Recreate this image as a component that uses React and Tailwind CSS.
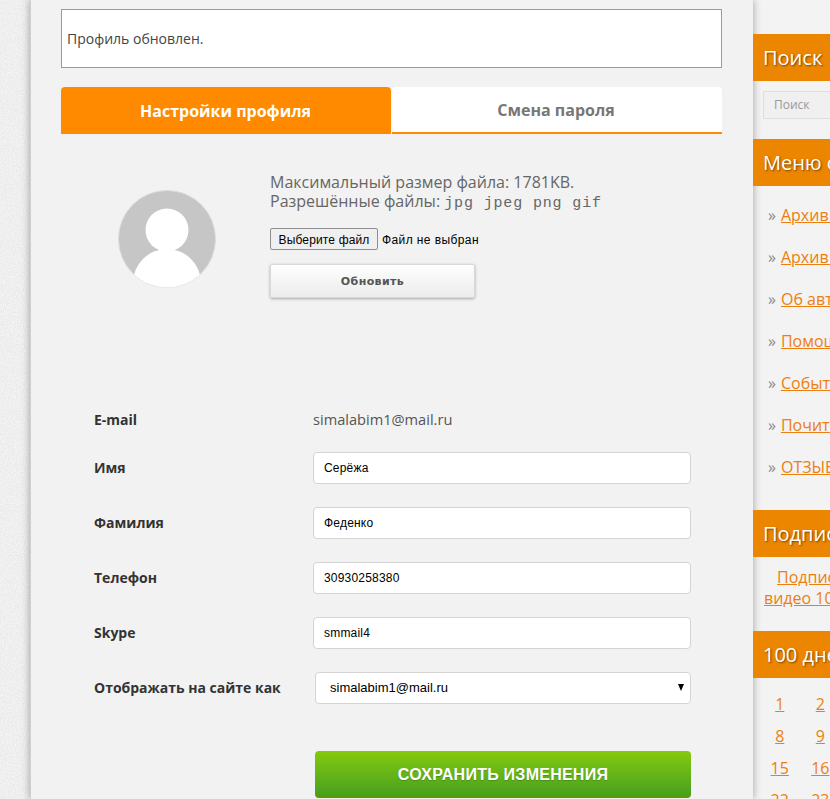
import React from 'react';

const Field = ({ label, value }) => (
  <div className="flex items-center h-[32px] mb-[23px]">
    <label className="w-[252px] pl-[33px] pb-[2px] text-[14px] font-bold text-[#333]">{label}</label>
    <input
      readOnly
      value={value}
      className="w-[378px] h-[32px] bg-white border border-[#d4d4d4] rounded-[4px] px-[10px] text-[12px] tracking-[0.2px] text-black font-['Liberation_Sans'] outline-none"
    />
  </div>
);

const SideHead = ({ children }) => (
  <div className="relative z-20 h-[47px] bg-[#ec8600] pl-[10px] flex items-center text-[20px] text-white [text-shadow:1px_1px_2px_rgba(0,0,0,0.5)]">
    {children}
  </div>
);

const links = ['Архив прямых эфиров', 'Архив видео', 'Об авторе', 'Помощь', 'События', 'Почитать', 'ОТЗЫВЫ'];
const days = [1, 2, 3, 4, 5, 6, 7, 8, 9, 10, 11, 12, 13, 14, 15, 16, 17, 18, 19, 20, 21, 22, 23];

const App = () => {
  return (
    <div className="flex w-[830px] h-[799px] overflow-hidden bg-[#ededed] font-['Open_Sans',sans-serif]">
      {/* paper texture on the left gutter */}
      <div className="w-[30px] shrink-0">
        <svg className="block w-[30px] h-[799px]">
          <filter id="paper">
            <feTurbulence type="fractalNoise" baseFrequency="0.9" numOctaves="2" seed="4" />
            <feColorMatrix type="matrix" values="0 0 0 0 0.97  0 0 0 0 0.97  0 0 0 0 0.97  1.6 0 0 0 -0.5" />
          </filter>
          <rect width="30" height="799" fill="#e9e9e9" />
          <rect width="30" height="799" filter="url(#paper)" />
        </svg>
      </div>

      <main className="relative z-10 w-[723px] shrink-0 bg-[#f2f2f2] border-l border-[#d0d0d0] pl-[30px] pr-[30px] shadow-[0_0_8px_rgba(0,0,0,0.35)]">
        <div className="h-[59px] w-[661px] mt-[9px] bg-white border border-[#e68a2e] flex items-center pl-[5px] text-[14px] text-[#444]">
          Профиль обновлен.
        </div>

        <div className="flex w-[661px] h-[47px] mt-[19px] gap-[1px] text-[16px] font-bold">
          <div className="w-[330px] bg-[#ff8a00] rounded-t-[4px] text-white flex items-center justify-center pr-[1px]">
            Настройки профиля
          </div>
          <div className="w-[330px] bg-white rounded-t-[4px] border-b-2 border-[#ff8a00] text-[#777] flex items-center justify-center pr-[2px]">
            Смена пароля
          </div>
        </div>

        <div className="flex mt-[37px] h-[238px]">
          <div className="ml-[57px] mt-[19px] w-[98px] h-[98px] shrink-0">
            <svg viewBox="0 0 98 98" className="w-[98px] h-[98px]">
              <defs>
                <clipPath id="avatarClip"><circle cx="49" cy="49" r="48.5" /></clipPath>
              </defs>
              <circle cx="49" cy="49" r="48.5" fill="#c6c6c6" stroke="#dcdcdc" />
              <g clipPath="url(#avatarClip)">
                <circle cx="49" cy="40" r="21.5" fill="#fff" />
                <ellipse cx="49" cy="93" rx="34" ry="34" fill="#fff" />
              </g>
            </svg>
          </div>
          <div className="ml-[54px] pt-[2px]">
            <p className="text-[16px] leading-[19px] text-[#666]">Максимальный размер файла: 1781KB.</p>
            <p className="text-[16px] leading-[19px] text-[#666]">
              Разрешённые файлы: <span className="font-['Liberation_Mono'] text-[#666] text-[15px] tracking-[0.85px]">jpg jpeg png gif</span>
            </p>
            <div className="flex items-center mt-[15px] font-['Liberation_Sans'] text-[12px] text-black">
              <button className="w-[108px] h-[22px] pt-[1px] bg-[#efefef] border border-[#8f8f8f] rounded-[2px] tracking-[0.15px]">Выберите файл</button>
              <span className="ml-[4px] mt-[2px] tracking-[0.4px]">Файл не выбран</span>
            </div>
            <button className="block w-[205px] h-[34px] mt-[14px] pt-[2px] border border-[#d8d8d8] rounded-[2px] bg-gradient-to-b from-[#fefefe] to-[#ececec] shadow-[0_1px_3px_rgba(0,0,0,0.3)] text-[11px] font-bold tracking-[0.4px] text-[#555] font-['DejaVu_Sans']">
              Обновить
            </button>
          </div>
        </div>

        <div className="flex items-center h-[21px] mb-[22px]">
          <span className="w-[252px] pl-[33px] text-[14px] font-bold text-[#333]">E-mail</span>
          <span className="text-[14.6px] text-[#555]">simalabim1@mail.ru</span>
        </div>
        <div>
          <Field label="Имя" value="Серёжа" />
          <Field label="Фамилия" value="Феденко" />
          <Field label="Телефон" value="30930258380" />
          <Field label="Skype" value="smmail4" />
        </div>
        <div className="flex items-center h-[32px]">
          <label className="w-[254px] pl-[33px] pb-[2px] text-[14px] font-bold text-[#333] whitespace-nowrap">Отображать на сайте как</label>
          <div className="relative w-[376px] h-[32px] bg-white border border-[#d4d4d4] rounded-[4px] pl-[14px] flex items-center text-[13px] text-black font-['Liberation_Sans']">
            simalabim1@mail.ru
            <span className="absolute right-[6px] top-[11px] w-0 h-0 border-l-[3.5px] border-r-[3.5px] border-t-[7px] border-l-transparent border-r-transparent border-t-black" />
          </div>
        </div>
        <button className="block ml-[254px] mt-[47px] w-[376px] h-[47px] pt-[3px] rounded-[4px] bg-gradient-to-b from-[#84ca0a] to-[#46a01e] border-b-2 border-[#5c9a00] text-white text-[16px] tracking-[0.25px] font-bold font-['Liberation_Sans'] [text-shadow:0_1px_1px_rgba(0,0,0,0.2)]">
          СОХРАНИТЬ ИЗМЕНЕНИЯ
        </button>
      </main>

      <aside className="w-[300px] shrink-0 bg-[#f3f3f3] pt-[34px] whitespace-nowrap">
        <SideHead>Поиск</SideHead>
        <div className="h-[58px] pl-[10px] pt-[10px]">
          <div className="h-[28px] w-[200px] border border-[#dedede] bg-[#f0f0f0] pl-[10px] flex items-center text-[12px] text-[#999]">Поиск</div>
        </div>
        <SideHead>Меню сайта</SideHead>
        <ul className="pt-[8px] h-[324px] pl-[15px] text-[16px]">
          {links.map(l => (
            <li key={l} className="h-[42px] flex items-center text-[#888]">
              <span className="mr-[5px]">»</span>
              <a className="text-[#ec7f10] underline">{l}</a>
            </li>
          ))}
        </ul>
        <SideHead>Подписка</SideHead>
        <div className="h-[74px] pl-[11px] pt-[10px] text-[16px] leading-[21px] text-[#ec7f10] underline">
          <div className="pl-[13px]">Подписаться на</div>
          <div>видео 100 дней</div>
        </div>
        <SideHead>100 дней</SideHead>
        <div className="grid grid-cols-7 w-[290px] pl-[6px] pt-[10px] text-[16px] text-[#ec7f10] underline">
          {days.map(d => (
            <div key={d} className="w-[41.5px] h-[32px] flex items-center justify-center">{d}</div>
          ))}
        </div>
      </aside>
    </div>
  );
};

export default App;
